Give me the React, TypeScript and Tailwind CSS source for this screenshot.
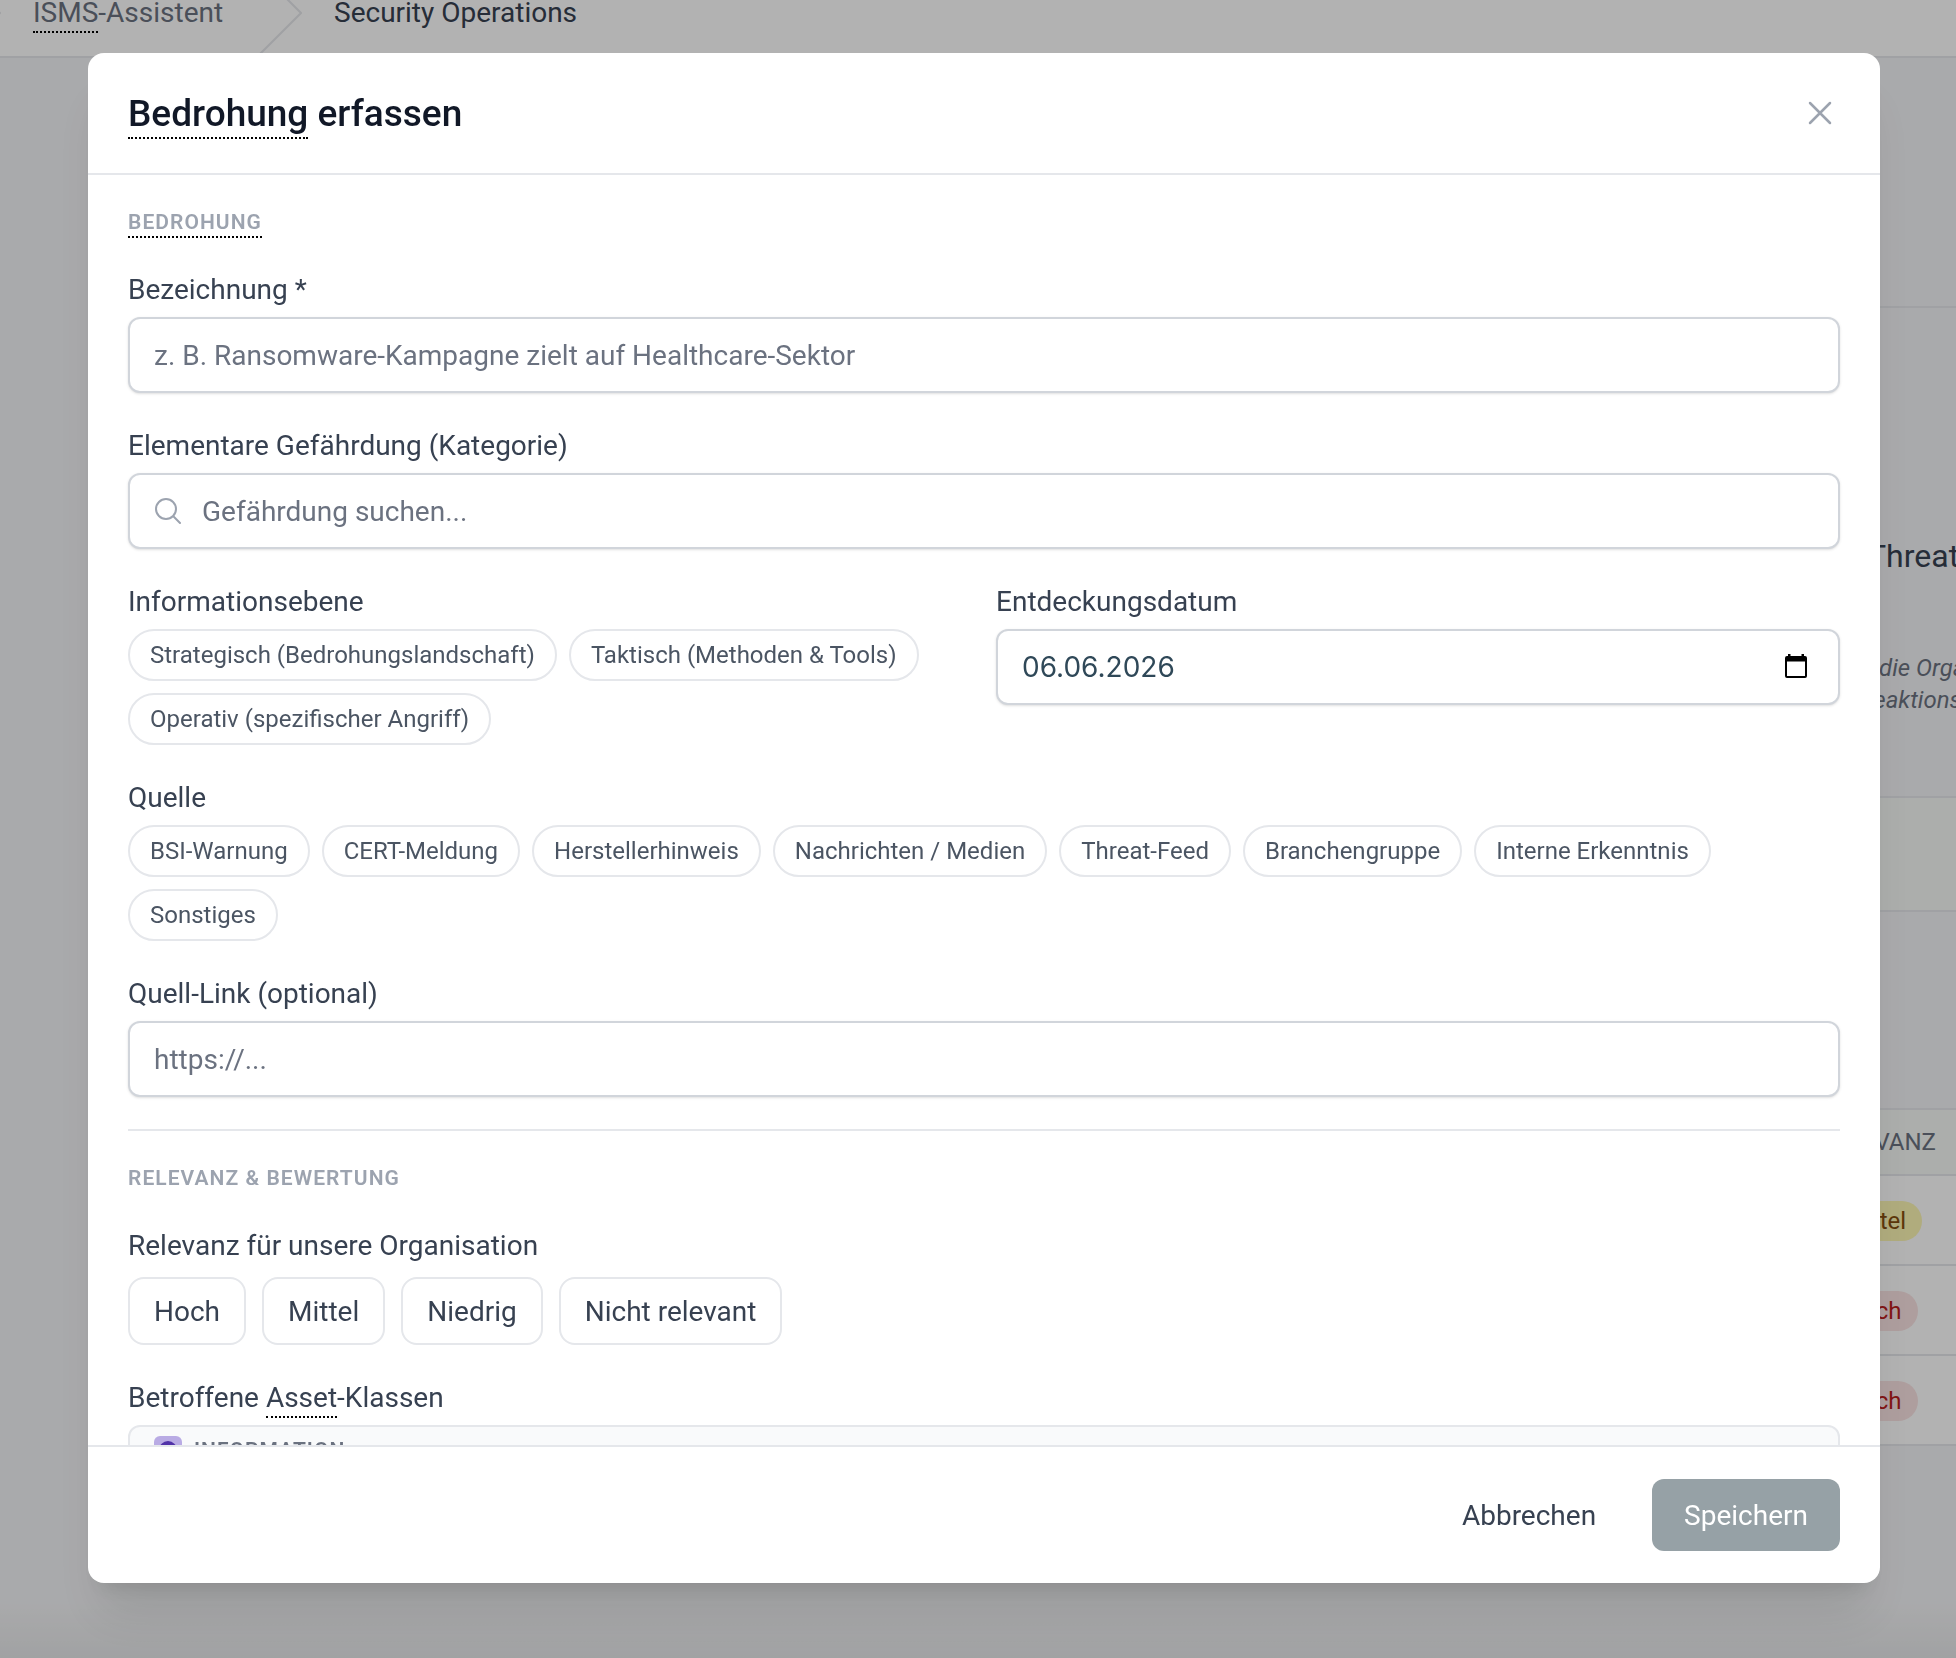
import type { ReactNode } from 'react';

const ebenen = ['Strategisch (Bedrohungslandschaft)', 'Taktisch (Methoden & Tools)', 'Operativ (spezifischer Angriff)'];

const quellen = [
  'BSI-Warnung',
  'CERT-Meldung',
  'Herstellerhinweis',
  'Nachrichten / Medien',
  'Threat-Feed',
  'Branchengruppe',
  'Interne Erkenntnis',
  'Sonstiges',
];

const relevanzen = ['Hoch', 'Mittel', 'Niedrig', 'Nicht relevant'];

const bedrohungen = [
  { id: 1, relevanz: 'Mittel', badge: 'bg-[#fcf6b4] text-[#854d0e]' },
  { id: 2, relevanz: 'Hoch', badge: 'bg-[#fae3e3] text-[#b91c1c]' },
  { id: 3, relevanz: 'Hoch', badge: 'bg-[#fae3e3] text-[#b91c1c]' },
];

const inputClass =
  'w-full h-[76px] rounded-xl border-2 border-[#d1d5db] bg-white px-6 text-[28px] shadow-sm placeholder:text-[#6b7280] outline-none focus:border-gray-500';

const labelClass = 'block mb-1.5 leading-[42px]';

// Glossary term with dotted underline
function Term({ children }: { children: ReactNode }) {
  return <abbr className="no-underline border-b-2 border-dotted border-black pb-0.5">{children}</abbr>;
}

function SectionTitle({ children }: { children: ReactNode }) {
  return (
    <h3 className="text-[21px] leading-[30px] font-semibold uppercase tracking-wider text-[#9ca3af]">{children}</h3>
  );
}

function ChipGroup({ id, label, options }: { id: string; label: string; options: string[] }) {
  return (
    <div role="group" aria-labelledby={id}>
      <div id={id} className={labelClass}>{label}</div>
      <div className="flex flex-wrap gap-3">
        {options.map((option) => (
          <button
            key={option}
            type="button"
            className="h-[52px] rounded-full border-2 border-[#e5e7eb] px-5 text-[24px] leading-8 text-[#4b5563] hover:bg-gray-50"
          >
            {option}
          </button>
        ))}
      </div>
    </div>
  );
}

function Chevron() {
  return (
    <svg className="h-[88px] w-[45px] shrink-0" viewBox="0 0 45 88" fill="none" stroke="#e5e7eb" strokeWidth="2">
      <path d="M0 0L44 44L0 88" />
    </svg>
  );
}

function Background() {
  return (
    <div className="flex min-h-screen flex-col overflow-hidden bg-[#f3f4f6] whitespace-nowrap">
      {/* Breadcrumb */}
      <nav className="flex h-[58px] shrink-0 items-end overflow-hidden border-b-2 border-[#e5e7eb] bg-white">
        <div className="-ml-11 flex h-[88px] shrink-0 items-center pt-0.5">
          <Chevron />
          <a href="#assistent" className="ml-8 w-56 text-[#6b7280]">
            <Term>ISMS</Term>-Assistent
          </a>
          <Chevron />
          <a href="#operations" className="ml-8 text-[#374151]">Security Operations</a>
        </div>
      </nav>

      <main className="ml-24 flex flex-col">
        <div className="h-[250px] shrink-0 border-b-2 border-[#e5e7eb]" />
        <div className="flex h-[488px] shrink-0 justify-end">
          <div className="w-[89px] pt-[227px]">
            <h2 className="text-[32px] leading-[42px] text-[#374151]">Threat Intelligence</h2>
            <p className="mt-[75px] pl-3 text-[24px] leading-8 text-[#6b7280] italic">
              die Organisation
              <br />
              <span className="-ml-5">Reaktionsplan</span>
            </p>
          </div>
        </div>
        <div className="h-[116px] shrink-0 border-y-2 border-[#e5e7eb] bg-[#f6f9f7]" />

        {/* Table of recorded threats */}
        <table className="mt-[196px] w-full table-fixed text-left text-[24px] leading-8">
          <thead>
            <tr className="h-[66px] border-y-2 border-[#e5e7eb] bg-[#f6f9f7]">
              <td />
              <th className="w-[139px] pr-5 text-right font-normal uppercase text-[#6b7280]">Relevanz</th>
            </tr>
          </thead>
          <tbody>
            {bedrohungen.map((bedrohung) => (
              <tr key={bedrohung.id} className="h-[90px] border-b-2 border-[#e5e7eb] bg-white">
                <td />
                <td className="pt-0.5 pl-3">
                  <span className={`inline-block rounded-full px-4 py-1 ${bedrohung.badge}`}>{bedrohung.relevanz}</span>
                </td>
              </tr>
            ))}
          </tbody>
        </table>
      </main>
      <div className="mt-auto h-14 bg-gradient-to-b from-transparent to-black/5" />
    </div>
  );
}

export default function App() {
  return (
    <div className="h-screen overflow-hidden font-['Roboto',sans-serif] text-[28px] leading-10">
      <Background />

      {/* Overlay */}
      <div className="fixed inset-0 flex bg-black/30 pt-[53px] pr-[76px] pb-[75px] pl-[88px]">
        {/* Modal */}
        <div
          role="dialog"
          aria-labelledby="modal-title"
          className="flex w-full flex-col overflow-hidden rounded-2xl bg-white text-[#374151] shadow-[0_40px_50px_-10px_rgba(0,0,0,0.1),0_16px_20px_-12px_rgba(0,0,0,0.1)]"
        >
          {/* Header */}
          <div className="flex h-[122px] shrink-0 items-center justify-between border-b-2 border-[#e5e7eb] px-10">
            <h2 id="modal-title" className="pt-0.5 text-[37px] font-medium text-[#111827]">
              <Term>Bedrohung</Term> erfassen
            </h2>
            <button type="button" aria-label="Schließen" className="text-[#9ca3af] hover:text-gray-600">
              <svg className="h-10 w-10" viewBox="0 0 24 24" fill="none" stroke="currentColor" strokeWidth="1.5">
                <path strokeLinecap="round" d="M6 18L18 6M6 6l12 12" />
              </svg>
            </button>
          </div>

          {/* Content */}
          <form className="min-h-0 flex-1 overflow-y-auto px-10 py-8 [scrollbar-width:none]">
            <div className="space-y-8">
              <SectionTitle>
                <Term>Bedrohung</Term>
              </SectionTitle>

              <div>
                <label htmlFor="bezeichnung" className={labelClass}>Bezeichnung *</label>
                <input
                  id="bezeichnung"
                  type="text"
                  className={inputClass}
                  placeholder="z. B. Ransomware-Kampagne zielt auf Healthcare-Sektor"
                />
              </div>

              <div>
                <label htmlFor="kategorie" className={labelClass}>Elementare Gefährdung (Kategorie)</label>
                <div className="relative">
                  <svg
                    className="absolute top-[22px] left-6 h-8 w-8 text-[#9ca3af]"
                    viewBox="0 0 24 24"
                    fill="none"
                    stroke="currentColor"
                    strokeWidth="1.5"
                  >
                    <path
                      strokeLinecap="round"
                      d="m21 21-5.197-5.197m0 0A7.5 7.5 0 1 0 5.196 5.196a7.5 7.5 0 0 0 10.607 10.607Z"
                    />
                  </svg>
                  <input id="kategorie" type="text" className={`${inputClass} pl-[72px]`} placeholder="Gefährdung suchen..." />
                </div>
              </div>

              <div className="grid grid-cols-2 gap-6">
                <ChipGroup id="ebene" label="Informationsebene" options={ebenen} />
                <div>
                  <label htmlFor="datum" className={labelClass}>Entdeckungsdatum</label>
                  <div className="relative">
                    <input
                      id="datum"
                      type="text"
                      className={`${inputClass} font-['Inter',sans-serif] text-[#2f4858]`}
                      defaultValue="06.06.2026"
                    />
                    <button type="button" aria-label="Kalender öffnen" className="absolute top-[25px] right-[33px]">
                      <svg className="h-6 w-[22px]" viewBox="0 0 22 24">
                        <path
                          fillRule="evenodd"
                          d="M3 0h2.500v2h11V0H19v2h1a2 2 0 0 1 2 2v18a2 2 0 0 1-2 2H2a2 2 0 0 1-2-2V4a2 2 0 0 1 2-2h1zM2 7.500V22h18V7.500z"
                        />
                      </svg>
                    </button>
                  </div>
                </div>
              </div>

              <ChipGroup id="quelle" label="Quelle" options={quellen} />

              <div>
                <label htmlFor="link" className={labelClass}>Quell-Link (optional)</label>
                <input id="link" type="url" className={inputClass} placeholder="https://..." />
              </div>
            </div>

            <div className="mt-8 space-y-8 border-t-2 border-[#e5e7eb] pt-8">
              <SectionTitle>Relevanz & Bewertung</SectionTitle>

              <div role="group" aria-labelledby="relevanz">
                <div id="relevanz" className="mb-2.5 leading-[42px]">Relevanz für unsere Organisation</div>
                <div className="flex flex-wrap gap-4">
                  {relevanzen.map((relevanz) => (
                    <button
                      key={relevanz}
                      type="button"
                      className="h-[68px] rounded-2xl border-2 border-[#e5e7eb] px-6 pt-0.5 hover:bg-gray-50"
                    >
                      {relevanz}
                    </button>
                  ))}
                </div>
              </div>

              <div>
                <div className={labelClass}>
                  Betroffene <Term>Asset</Term>-Klassen
                </div>
                <div className="rounded-xl border-2 border-[#e5e7eb] bg-[#f9fafb] px-6 py-[9px]">
                  <div className="flex items-center gap-3">
                    <span className="flex h-7 w-7 items-center justify-center rounded-md bg-[#b9abe4]">
                      <span className="h-[18px] w-[18px] rounded-full bg-[#5132a8]" />
                    </span>
                    <span className="text-[21px] leading-7 font-semibold uppercase tracking-wider text-[#6b7280]">
                      Information
                    </span>
                  </div>
                </div>
              </div>
            </div>
          </form>

          {/* Footer */}
          <div className="flex shrink-0 items-center justify-end gap-6 border-t-2 border-[#e5e7eb] px-10 py-8">
            <button type="button" className="h-[72px] rounded-xl px-8 pt-0.5 hover:bg-gray-50">Abbrechen</button>
            <button type="submit" className="h-[72px] rounded-xl bg-[#96a1a6] px-8 pt-0.5 text-white">Speichern</button>
          </div>
        </div>
      </div>
    </div>
  );
}
